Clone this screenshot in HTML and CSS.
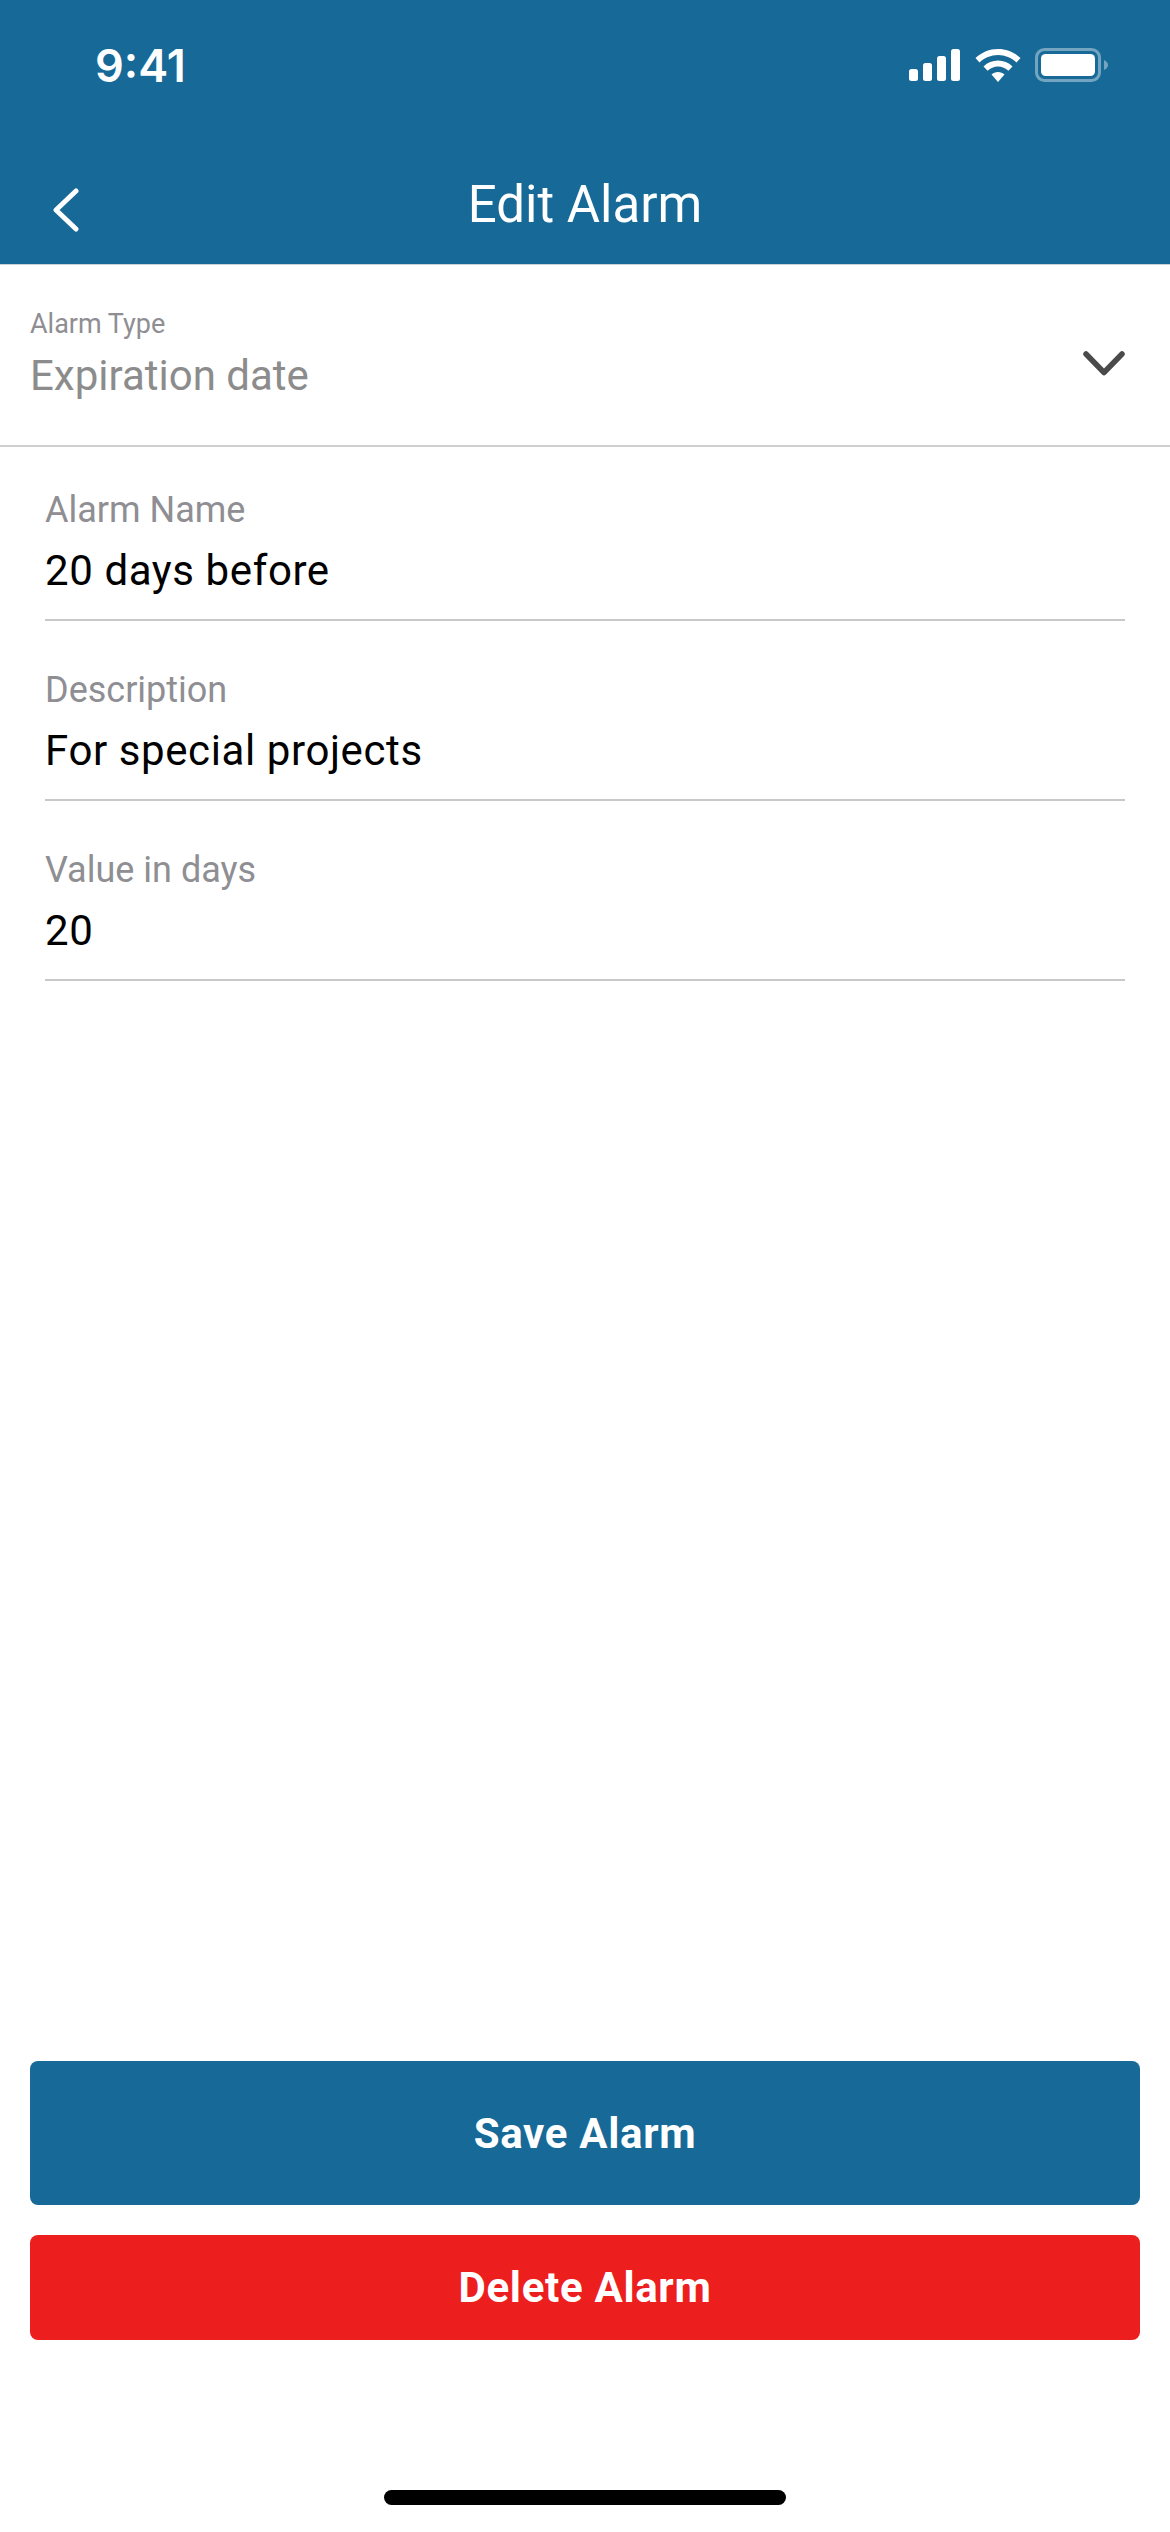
FILE: index.html
```html
<!DOCTYPE html>
<html lang="en">
<head>
  <meta charset="UTF-8">
  <title>Edit Alarm</title>
  <meta name="viewport" content="width=device-width, initial-scale=1.0">
  <link rel="stylesheet" href="styles.css">
</head>
<body>
  <div class="screen">
    <header class="header">
      <div class="status-bar">
        <span class="time">9:41</span>
        <div class="status-icons">
          <svg class="icon-signal" width="52" height="32" viewBox="0 0 52 32">
            <rect x="0" y="20" width="9" height="12" rx="2.500"/>
            <rect x="14" y="14" width="9" height="18" rx="2.500"/>
            <rect x="28" y="7" width="9" height="25" rx="2.500"/>
            <rect x="42" y="0" width="9" height="32" rx="2.500"/>
          </svg>
          <svg class="icon-wifi" width="46" height="33" viewBox="0 0 46 33">
            <path d="M23 0C14.500 0 6.700 3.300 0.500 9L4.500 13.500C9.500 8.800 16 6 23 6S36.500 8.800 41.500 13.500L45.500 9C39.300 3.300 31.500 0 23 0Z"/>
            <path d="M23 11.500C17.500 11.500 12.600 13.600 8.500 17.400L12.600 21.800C15.500 19.200 19 17.600 23 17.600S30.500 19.200 33.400 21.800L37.500 17.400C33.400 13.600 28.500 11.500 23 11.500Z"/>
            <path d="M23 23C20.500 23 18.200 23.900 16.500 25.500L23 33L29.500 25.500C27.800 23.900 25.500 23 23 23Z"/>
          </svg>
          <svg class="icon-battery" width="74" height="34" viewBox="0 0 74 34">
            <rect x="1.500" y="1.500" width="63" height="31" rx="8" fill="none" stroke="#fff" stroke-opacity="0.4" stroke-width="3"/>
            <rect x="6" y="6" width="54" height="22" rx="4.500" fill="#fff"/>
            <path d="M69 12C71.500 13 73 15 73 17S71.500 21 69 22Z" fill="#fff" fill-opacity="0.4"/>
          </svg>
        </div>
      </div>
      <div class="nav-bar">
        <svg class="back-icon" width="26" height="44" viewBox="0 0 26 44">
          <path d="M23 3L3 22L23 41" fill="none" stroke="#fff" stroke-width="5" stroke-linecap="round" stroke-linejoin="round"/>
        </svg>
        <h1 class="nav-title">Edit Alarm</h1>
      </div>
    </header>

    <div class="type-select">
      <div>
        <div class="type-label">Alarm Type</div>
        <div class="type-value">Expiration date</div>
      </div>
      <svg class="chevron" width="42" height="25" viewBox="0 0 42 25">
        <path d="M3 3L21 21.500L39 3" fill="none" stroke="#4a4a4a" stroke-width="5.500" stroke-linecap="round" stroke-linejoin="round"/>
      </svg>
    </div>

    <div class="fields">
      <div class="field">
        <div class="field-label">Alarm Name</div>
        <div class="field-value">20 days before</div>
      </div>
      <div class="field">
        <div class="field-label">Description</div>
        <div class="field-value">For special projects</div>
      </div>
      <div class="field">
        <div class="field-label">Value in days</div>
        <div class="field-value">20</div>
      </div>
    </div>

    <div class="actions">
      <button class="btn btn-save">Save Alarm</button>
      <button class="btn btn-delete">Delete Alarm</button>
    </div>

    <div class="home-area">
      <div class="home-bar"></div>
    </div>
  </div>
</body>
</html>
```

FILE: styles.css
```css
:root {
  --primary: #176a97;
  --danger: #ed1e1e;
  --line: #c8c8ca;
  --muted: #8e8e93;
}

* {
  box-sizing: border-box;
}

html, body {
  margin: 0;
  padding: 0;
  height: 100%;
  background-color: #fff;
  font-family: Roboto, sans-serif;
}

.screen {
  display: flex;
  flex-direction: column;
  height: 2532px;
}

.header {
  height: 265px;
  background-color: var(--primary);
  color: #fff;
  border-bottom: 1px solid #c9d3da;
}

.status-bar {
  display: flex;
  justify-content: space-between;
  align-items: center;
  height: 130px;
  padding: 0 61px 0 95px;
}

.time {
  font-family: Inter, sans-serif;
  font-size: 45px;
  font-weight: 600;
}

.status-icons {
  display: flex;
  align-items: center;
  gap: 14px;
}

.status-icons svg {
  fill: #fff;
}

.nav-bar {
  position: relative;
  display: flex;
  justify-content: center;
  align-items: center;
  height: 134px;
  padding-top: 14px;
}

.back-icon {
  position: absolute;
  left: 53px;
  top: 58px;
}

.nav-title {
  margin: 0;
  font-size: 51px;
  font-weight: 400;
}

.type-select {
  display: flex;
  justify-content: space-between;
  align-items: flex-start;
  height: 182px;
  padding: 44px 45px 0 30px;
  border-bottom: 2px solid #d0d0d2;
}

.type-label {
  font-size: 27px;
  line-height: 30px;
  color: var(--muted);
}

.type-value {
  margin-top: 12px;
  font-size: 42px;
  line-height: 50px;
  color: #8c8c8c;
}

.chevron {
  margin-top: 42px;
}

.fields {
  padding: 0 45px;
}

.field {
  height: 180px;
  padding-top: 47px;
  border-bottom: 2px solid var(--line);
}

.field:first-child {
  height: 174px;
  padding-top: 41px;
}

.field-label {
  font-size: 36px;
  line-height: 44px;
  color: var(--muted);
}

.field-value {
  margin-top: 14px;
  font-size: 42px;
  line-height: 50px;
  letter-spacing: 0.6px;
  color: #000;
}

.actions {
  display: flex;
  flex-direction: column;
  gap: 30px;
  margin-top: auto;
  padding: 0 30px;
}

.btn {
  border: none;
  border-radius: 8px;
  color: #fff;
  font-family: Roboto, sans-serif;
  font-size: 42px;
  font-weight: 700;
  letter-spacing: 0.7px;
}

.btn-save {
  height: 144px;
  background-color: var(--primary);
}

.btn-delete {
  height: 105px;
  background-color: var(--danger);
}

.home-area {
  display: flex;
  justify-content: center;
  height: 192px;
  padding-top: 150px;
}

.home-bar {
  width: 402px;
  height: 15px;
  border-radius: 8px;
  background-color: #000;
}
```
